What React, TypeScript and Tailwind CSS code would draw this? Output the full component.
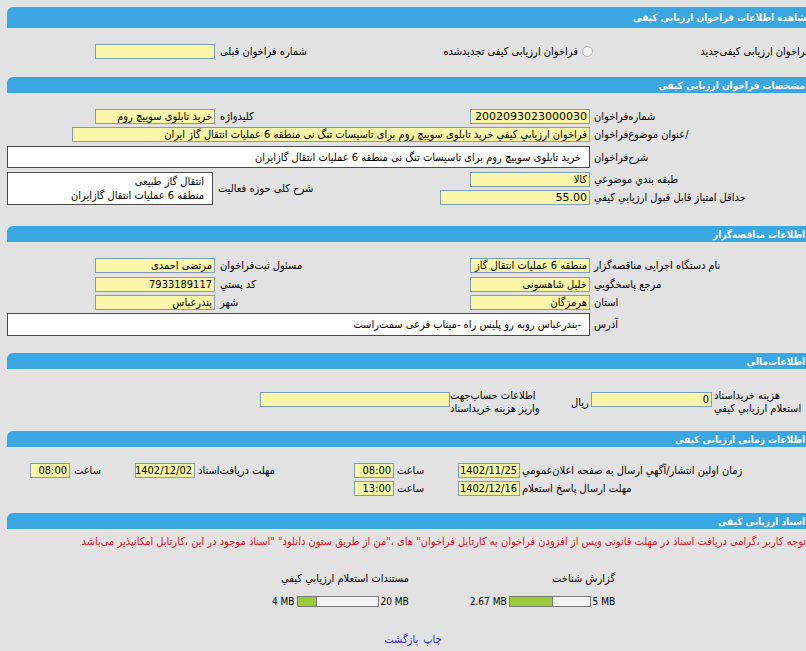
import React from "react";

// shared look of the read-only yellow fields
const fld =
  "h-[15px] border border-[#7f9db9] bg-[#fbf7aa] px-[2px] leading-[13px] whitespace-nowrap overflow-hidden text-right";
const box = "bg-white border border-[#4a4a4a]";

function Field({ w, children, cls = "" }: { w: string; children?: React.ReactNode; cls?: string }) {
  return (
    <div dir="rtl" className={`${fld} ${w} ${cls}`}>
      {children}
    </div>
  );
}

function Radio() {
  return <span className="inline-block w-[11px] h-[11px] rounded-full border border-[#b4b4b4] bg-[#f2f2f2] shrink-0" />;
}

function Head({ title, mt }: { title: string; mt: string }) {
  return (
    <div
      className={`${mt} ml-[7px] w-[801px] h-[16px] bg-[#3aa6e2] rounded-tl-[6px] flex items-center justify-end pr-[3px] text-white font-bold text-[10px]`}
    >
      <span dir="rtl">{title}</span>
    </div>
  );
}

function Bar({ low, high, fill }: { low: string; high: string; fill: string }) {
  return (
    <div className="flex items-center h-[13px] text-[10px]">
      <span>{low}</span>
      <div className="ml-[2px] w-[82px] h-[11px] border border-[#7c7c7c] bg-[#f4f4f4] flex">
        <div className={`${fill} bg-[#9cc93a] border-r border-[#7c7c7c]`} />
      </div>
      <span className="ml-[2px]">{high}</span>
    </div>
  );
}

export default function App() {
  return (
    <div className="w-[806px] h-[651px] overflow-hidden bg-[#e2e2e2] font-['DejaVu_Sans_Condensed','DejaVu_Sans',sans-serif] font-stretch-condensed text-[11px] leading-[15px] text-black">
      <div className="w-[830px]">
        {/* page title */}
        <div className="mt-[7px] ml-[7px] w-[810px] h-[21px] bg-[#3aa6e2] rounded-tl-[6px] flex items-center justify-end pr-[5px] text-white font-bold text-[10px]">
          <span dir="rtl">مشاهده اطلاعات فراخوان ارزیابی کیفی</span>
        </div>

        <div className="mt-[16px] h-[15px] flex items-center">
          <div className="w-[215px] flex justify-end">
            <Field w="w-[120px]" />
          </div>
          <div className="w-[378px] pl-[5px] flex justify-between items-center">
            <span dir="rtl">شماره فراخوان قبلی</span>
            <span className="flex items-center gap-[4px]">
              <span dir="rtl">فراخوان ارزیابی کیفی تجدیدشده</span>
              <Radio />
            </span>
          </div>
          <div className="w-[232px] flex justify-end items-center gap-[4px]">
            <span dir="rtl">فراخوان ارزیابی کیفی‌جدید</span>
            <Radio />
          </div>
        </div>

        {/* call details */}
        <Head mt="mt-[18px]" title="مشخصات فراخوان ارزیابی کیفی" />

        <div className="mt-[16px] h-[15px] flex items-center">
          <div className="w-[215px] flex justify-end">
            <Field w="w-[120px]">خرید تابلوی سوییچ روم</Field>
          </div>
          <div className="w-[375px] pl-[5px] flex justify-between items-center">
            <span dir="rtl">کلیدواژه</span>
            <Field w="w-[120px]" cls="font-['DejaVu_Sans'] font-stretch-normal">
              2002093023000030
            </Field>
          </div>
          <span dir="rtl" className="ml-[4px]">شماره‌فراخوان</span>
        </div>

        <div className="mt-[3px] h-[15px] flex items-center">
          <div className="w-[590px] flex justify-end">
            <Field w="w-[518px]">
              فراخوان ارزيابي كيفي خريد تابلوی سوييچ روم برای تاسيسات تنگ نی منطقه 6 عمليات انتقال گاز ايران
            </Field>
          </div>
          <span dir="rtl" className="ml-[4px]">/عنوان  موضوع‌فراخوان</span>
        </div>

        <div className="mt-[4px] flex items-center">
          <div className={`ml-[7px] w-[583px] h-[22px] ${box} flex items-center justify-end pr-[8px]`}>
            <span dir="rtl">خرید  تابلوی  سوییچ روم برای تاسیسات تنگ نی منطقه 6 عملیات انتقال گازایران</span>
          </div>
          <span dir="rtl" className="ml-[4px]">شرح‌فراخوان</span>
        </div>

        <div className="mt-[4px] flex items-center">
          <div className={`ml-[7px] w-[206px] h-[33px] ${box} flex flex-col justify-center items-end pr-[8px] leading-[14px]`}>
            <span dir="rtl">انتقال گاز طبیعی</span>
            <span dir="rtl">منطقه 6 عملیات انتقال گازایران</span>
          </div>
          <div dir="rtl" className="ml-[5px] w-[212px] text-left">شرح کلی حوزه فعالیت</div>
          <div className="flex flex-col gap-[3px]">
            <div className="flex items-center">
              <div className="w-[160px] flex justify-end">
                <Field w="w-[120px]">کالا</Field>
              </div>
              <span dir="rtl" className="ml-[4px]">طبقه بندي موضوعي</span>
            </div>
            <div className="flex items-center">
              <div className="w-[160px] flex justify-end">
                <Field w="w-[150px]" cls="font-['DejaVu_Sans'] font-stretch-normal">
                  55.00
                </Field>
              </div>
              <span dir="rtl" className="ml-[4px]">حداقل امتیاز قابل قبول ارزيابي كيفي</span>
            </div>
          </div>
        </div>

        {/* tender owner */}
        <Head mt="mt-[21px]" title="اطلاعات مناقصه‌گزار" />

        <div className="mt-[16px] h-[15px] flex items-center">
          <div className="w-[215px] flex justify-end">
            <Field w="w-[120px]">مرتضی احمدی</Field>
          </div>
          <div className="w-[375px] pl-[5px] flex justify-between items-center">
            <span dir="rtl">مسئول ثبت‌فراخوان</span>
            <Field w="w-[120px]">منطقه 6 عملیات انتقال گاز</Field>
          </div>
          <span dir="rtl" className="ml-[4px]">نام دستگاه اجرایی مناقصه‌گزار</span>
        </div>

        <div className="mt-[4px] h-[15px] flex items-center">
          <div className="w-[215px] flex justify-end">
            <Field w="w-[120px]">7933189117</Field>
          </div>
          <div className="w-[375px] pl-[5px] flex justify-between items-center">
            <span dir="rtl">کد پستي</span>
            <Field w="w-[120px]">خلیل شاهسونی</Field>
          </div>
          <span dir="rtl" className="ml-[4px]">مرجع پاسخگويي</span>
        </div>

        <div className="mt-[3px] h-[15px] flex items-center">
          <div className="w-[215px] flex justify-end">
            <Field w="w-[120px]">بندرعباس</Field>
          </div>
          <div className="w-[375px] pl-[5px] flex justify-between items-center">
            <span dir="rtl">شهر</span>
            <Field w="w-[120px]">هرمزگان</Field>
          </div>
          <span dir="rtl" className="ml-[4px]">استان</span>
        </div>

        <div className="mt-[3px] flex items-center">
          <div className={`ml-[7px] w-[583px] h-[23px] ${box} flex items-center justify-end pr-[8px]`}>
            <span dir="rtl">-بندرعباس روبه رو پلیس راه -میناب فرعی سمت‌راست</span>
          </div>
          <span dir="rtl" className="ml-[4px]">آدرس</span>
        </div>

        {/* money */}
        <Head mt="mt-[17px]" title="اطلاعات‌مالي" />

        <div className="mt-[20px] h-[26px] flex items-start">
          <div className="ml-[260px] mt-[3px]">
            <Field w="w-[190px]" />
          </div>
          <div dir="rtl" className="w-[121px] flex flex-col items-end leading-[13px] whitespace-nowrap">
            <span>اطلاعات حساب‌جهت</span>
            <span>واریز هزینه خرید‌اسناد</span>
          </div>
          <div dir="rtl" className="mt-[6px] w-[20px] text-left">ریال</div>
          <div className="mt-[3px]">
            <Field w="w-[121px]">0</Field>
          </div>
          <div dir="rtl" className="ml-[2px] flex flex-col items-end leading-[13px] whitespace-nowrap">
            <span>هزینه خرید‌اسناد</span>
            <span>استعلام ارزيابي كيفي</span>
          </div>
        </div>

        {/* dates */}
        <Head mt="mt-[16px]" title="اطلاعات زمانی ارزیابی کیفی" />

        <div className="mt-[16px] h-[15px] flex items-center">
          <div className="ml-[30px]">
            <Field w="w-[40px]">08:00</Field>
          </div>
          <div dir="rtl" className="w-[65px] pl-[4px] text-left">ساعت</div>
          <Field w="w-[60px]">1402/12/02</Field>
          <div dir="rtl" className="w-[159px] pl-[3px] text-left">مهلت دریافت‌اسناد</div>
          <Field w="w-[40px]">08:00</Field>
          <div dir="rtl" className="w-[64px] pl-[3px] text-left">ساعت</div>
          <Field w="w-[62px]">1402/11/25</Field>
          <span dir="rtl" className="ml-[2px]">زمان اولین انتشار/آگهي ارسال به صفحه اعلان‌عمومي</span>
        </div>

        <div className="mt-[3px] h-[15px] flex items-center">
          <div className="ml-[354px]">
            <Field w="w-[40px]">13:00</Field>
          </div>
          <div dir="rtl" className="w-[64px] pl-[3px] text-left">ساعت</div>
          <Field w="w-[62px]">1402/12/16</Field>
          <span dir="rtl" className="ml-[2px]">مهلت ارسال پاسخ استعلام</span>
        </div>

        {/* documents */}
        <Head mt="mt-[17px]" title="اسناد ارزیابی کیفی" />

        <div className="mt-[5px] h-[14px] w-[806px] flex justify-end text-[#e3141b]">
          <span dir="rtl" className="whitespace-nowrap">
            توجه کاربر ،گرامی دریافت اسناد در مهلت قانونی وپس از افزودن فراخوان به کارتابل فراخوان" های ،"من از طریق ستون دانلود" "اسناد موجود در این ،کارتابل امکانپذیر می‌باشد
          </span>
        </div>

        <div className="mt-[23px] ml-[272px] flex items-start gap-[61px]">
          <div className="flex flex-col items-end gap-[9px]">
            <span dir="rtl">مستندات استعلام ارزيابي كيفي</span>
            <Bar low="4 MB" high="20 MB" fill="w-[19px]" />
          </div>
          <div className="flex flex-col items-end gap-[9px]">
            <span dir="rtl">گزارش شناخت</span>
            <Bar low="2.67 MB" high="5 MB" fill="w-[43px]" />
          </div>
        </div>

        <div className="mt-[24px] ml-[385px] w-[56px] flex justify-center text-[#2d2dd0]" dir="rtl">
          <span>چاپ</span>
          <span className="mr-[5px]">بازگشت</span>
        </div>
      </div>
    </div>
  );
}
